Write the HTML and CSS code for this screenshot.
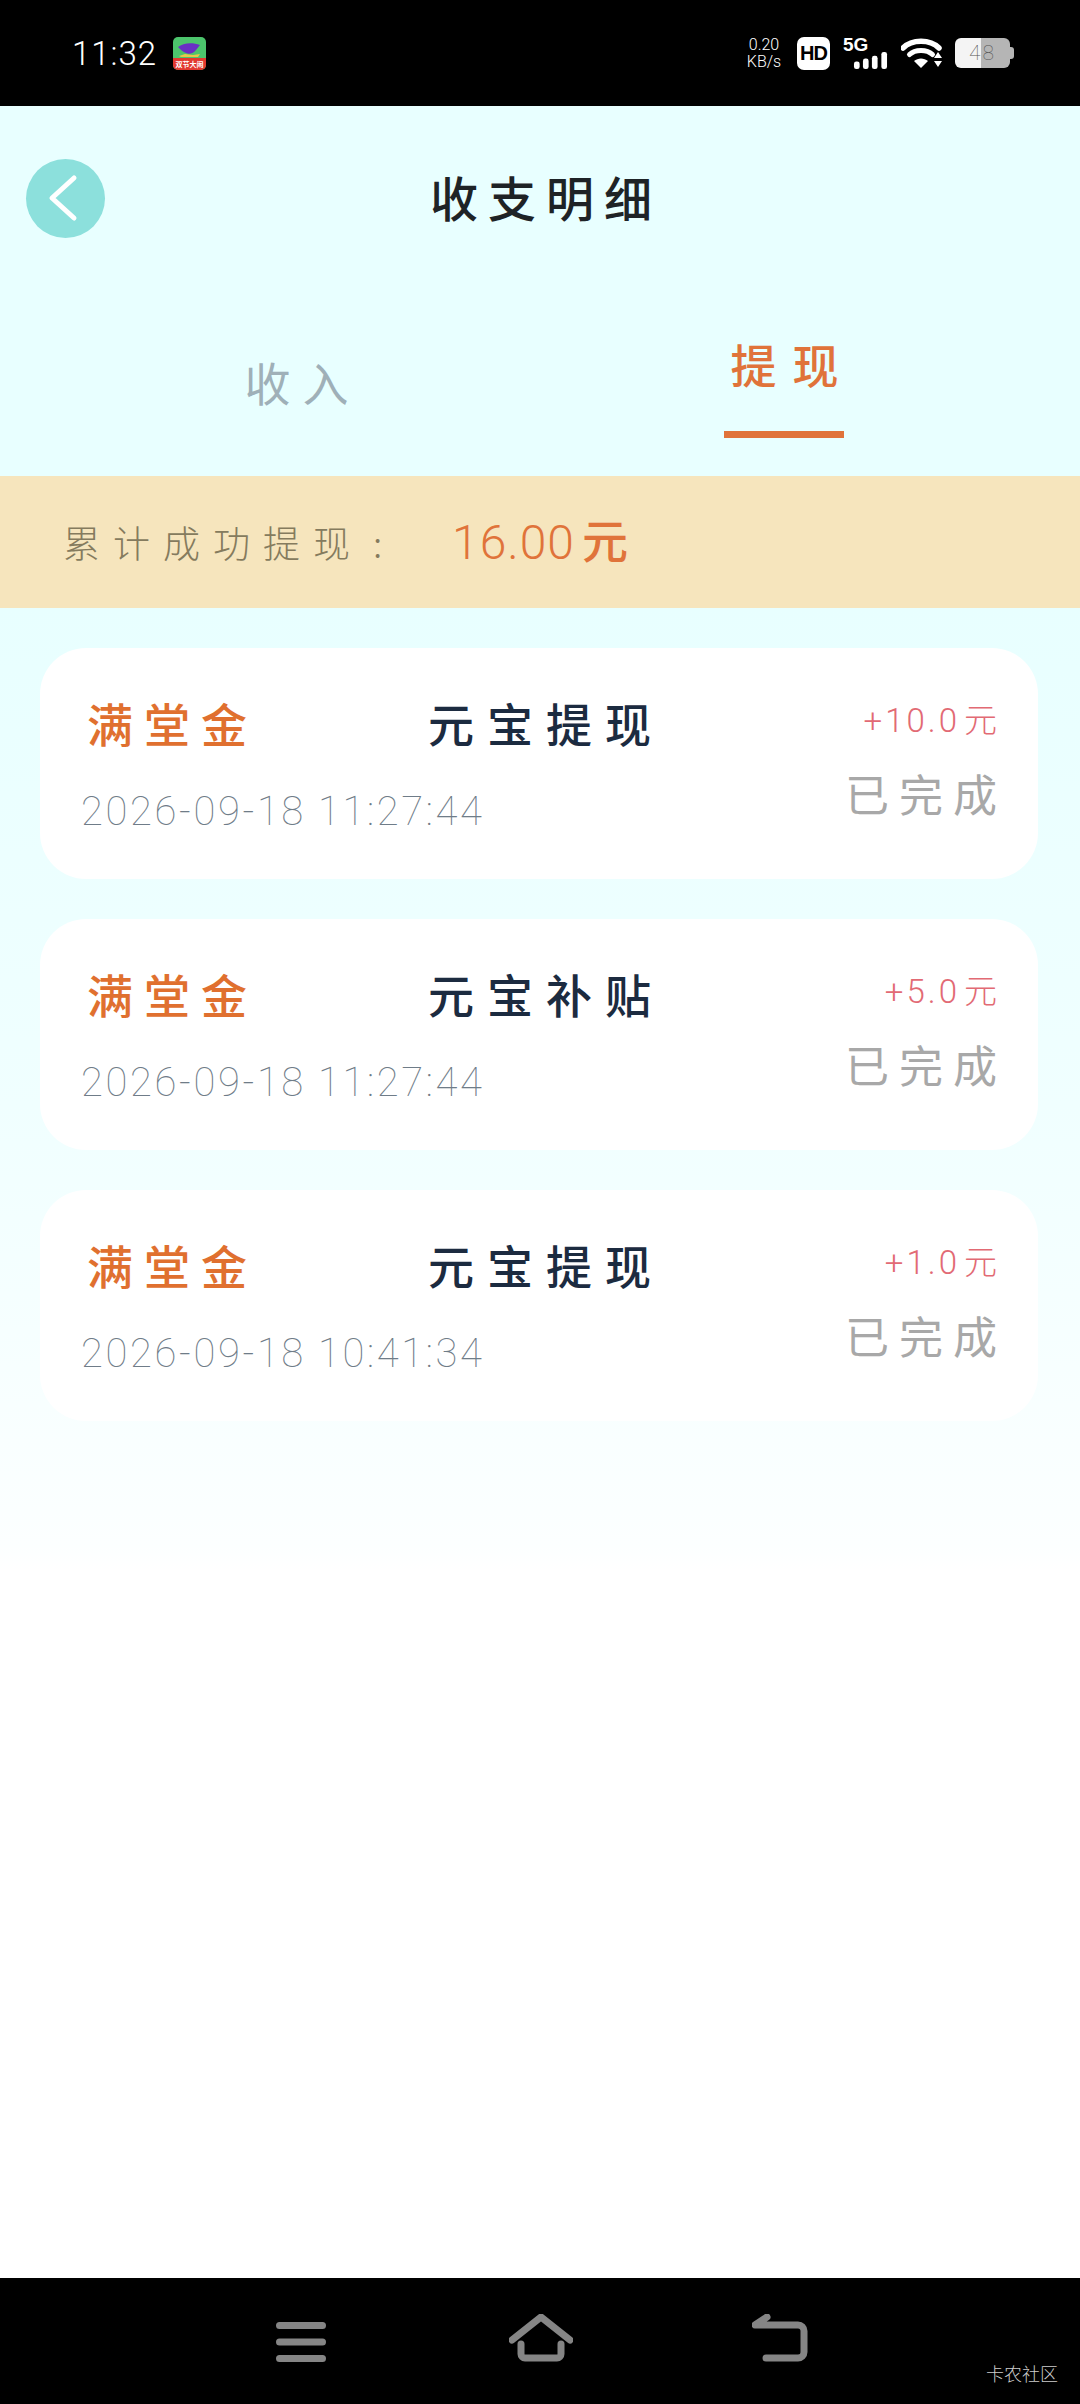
FILE: index.html
```html
<!DOCTYPE html>
<html lang="zh-CN">
<head>
<meta charset="utf-8">
<title>收支明细</title>
<link rel="stylesheet" href="styles.css">
</head>
<body>
<div class="page">
  <header class="statusbar">
    <div class="status-left">
      <span class="clock">11:32</span>
      <svg class="app-icon" viewBox="0 0 33 33" width="33" height="33">
        <rect width="33" height="33" rx="5" fill="#4cc46c"/>
        <path d="M0 21H33V28a5 5 0 0 1-5 5H5a5 5 0 0 1-5-5Z" fill="#e2392f"/>
        <path d="M5 10c5-4 14-5 22-2l-4 5c-2 3-7 5-10 3C10 15 7 12 5 10Z" fill="#6a2fc4"/>
        <path d="M6 19l6-2 8 1 7-1-2 3H8Z" fill="#e8c84a"/>
        <text class="app-icon-text" x="16.5" y="30" text-anchor="middle">双节大闹</text>
      </svg>
    </div>
    <div class="status-right">
      <span class="speed"><span>0.20</span><span>KB/s</span></span>
      <span class="hd">HD</span>
      <span class="net">
        <span class="net-label">5G</span>
        <svg class="signal" viewBox="0 0 35 18" width="35" height="18">
          <rect x="0" y="10" width="6" height="8" rx="2.5" fill="#fff"/>
          <rect x="9.5" y="7" width="6" height="11" rx="2.5" fill="#fff"/>
          <rect x="19" y="4" width="6" height="14" rx="2.5" fill="#fff"/>
          <rect x="29" y="0" width="6" height="18" rx="2.5" fill="#fff"/>
        </svg>
      </span>
      <svg class="wifi" viewBox="0 0 42 30" width="42" height="30">
        <path d="M2 10C11 1 29 1 38 10" fill="none" stroke="#fff" stroke-width="5.5" stroke-linecap="round"/>
        <path d="M8.500 16.500C14 11 26 11 31.500 16.500" fill="none" stroke="#fff" stroke-width="5" stroke-linecap="round"/>
        <path d="M13 23C17 19.500 23 19.500 27 23L20 30Z" fill="#fff"/>
        <path d="M37 14l4 6h-8ZM33 23h8l-4 6Z" fill="#fff"/>
      </svg>
      <span class="battery"><span class="battery-level">48</span></span>
    </div>
  </header>

  <main class="content">
    <div class="topbar">
      <button class="back" type="button" aria-label="返回">
        <svg viewBox="0 0 79 79" width="79" height="79">
          <path d="M48 19 L26 39 L48 59" fill="none" stroke="#fff" stroke-width="5" stroke-linecap="round" stroke-linejoin="round"/>
        </svg>
      </button>
      <h1 class="title">收支明细</h1>
    </div>

    <nav class="tabs">
      <div class="tab">收入</div>
      <div class="tab tab-active">提现<i class="tab-line"></i></div>
    </nav>

    <section class="summary">
      <span class="summary-label">累计成功提现<span class="summary-colon">:</span></span>
      <span class="summary-value">16.00<b>元</b></span>
    </section>

    <section class="list">
      <article class="card">
        <div class="card-top">
          <span class="card-name">满堂金</span>
          <span class="card-type">元宝提现</span>
          <span class="card-amount">+10.0<b>元</b></span>
        </div>
        <div class="card-bottom">
          <span class="card-date">2026-09-18 11:27:44</span>
          <span class="card-status">已完成</span>
        </div>
      </article>
      <article class="card">
        <div class="card-top">
          <span class="card-name">满堂金</span>
          <span class="card-type">元宝补贴</span>
          <span class="card-amount">+5.0<b>元</b></span>
        </div>
        <div class="card-bottom">
          <span class="card-date">2026-09-18 11:27:44</span>
          <span class="card-status">已完成</span>
        </div>
      </article>
      <article class="card">
        <div class="card-top">
          <span class="card-name">满堂金</span>
          <span class="card-type">元宝提现</span>
          <span class="card-amount">+1.0<b>元</b></span>
        </div>
        <div class="card-bottom">
          <span class="card-date">2026-09-18 10:41:34</span>
          <span class="card-status">已完成</span>
        </div>
      </article>
    </section>
  </main>

  <footer class="navbar">
    <svg class="nav-icon" viewBox="0 0 50 40" width="50" height="40">
      <path d="M3.500 3.500H46.500M3.500 20H46.500M3.500 36.500H46.500" fill="none" stroke="#858585" stroke-width="7" stroke-linecap="round"/>
    </svg>
    <svg class="nav-icon" viewBox="0 0 64 48" width="64" height="48">
      <path d="M3 26L32 3L61 26" fill="none" stroke="#858585" stroke-width="7" stroke-linecap="round" stroke-linejoin="round"/>
      <path d="M12 30V40a4 4 0 0 0 4 4H48a4 4 0 0 0 4-4V30" fill="none" stroke="#858585" stroke-width="7" stroke-linecap="round"/>
    </svg>
    <svg class="nav-icon" viewBox="0 0 56 48" width="56" height="48">
      <path d="M15 3L3 11L10 11H46a6 6 0 0 1 6 6V38a6 6 0 0 1-6 6H14" fill="none" stroke="#858585" stroke-width="7" stroke-linecap="round" stroke-linejoin="round"/>
    </svg>
    <span class="watermark">卡农社区</span>
  </footer>
</div>
</body>
</html>
```
FILE: styles.css
```css
* { box-sizing: border-box; }
html, body { margin: 0; padding: 0; }
body { font-family: "Noto Sans CJK SC", "Noto Sans", sans-serif; background: #fff; }
b, i { font-style: normal; font-weight: inherit; }

.page { width: 1080px; height: 2404px; display: flex; flex-direction: column; overflow: hidden; }

/* status bar */
.statusbar { height: 106px; flex: none; background: #000; color: #fff; display: flex; justify-content: space-between; align-items: center; padding: 0 70px 0 72px; }
.status-left { display: flex; align-items: center; gap: 16px; }
.clock { font-family: Roboto, sans-serif; font-weight: 300; font-size: 33px; line-height: 40px; letter-spacing: 1px; width: 85px; margin-top: 2px; }
.app-icon { display: block; }
.app-icon-text { font-size: 7px; fill: #fff; font-weight: 700; }
.status-right { display: flex; align-items: center; }
.speed { display: flex; flex-direction: column; align-items: center; width: 32px; font-family: Roboto, sans-serif; font-weight: 300; font-size: 16px; line-height: 17px; margin-right: 17px; }
.hd { width: 33px; height: 33px; border-radius: 7px; background: #fff; color: #000; font-family: "Liberation Sans", sans-serif; font-weight: 700; font-size: 20px; line-height: 33px; text-align: center; margin-right: 13px; letter-spacing: -1px; }
.net { display: flex; flex-direction: column; width: 45px; height: 32px; margin-right: 13px; }
.net-label { font-family: "Liberation Sans", sans-serif; font-weight: 700; font-size: 19px; line-height: 15px; }
.signal { display: block; margin-left: 10px; }
.wifi { display: block; margin-right: 12px; }
.battery { width: 55px; height: 30px; border-radius: 6px; background: linear-gradient(90deg, #f4f4f4 0 48%, #b5b5b5 48% 100%); color: #555; font-family: Roboto, sans-serif; font-weight: 100; font-size: 21px; line-height: 30px; text-align: center; position: relative; }
.battery::after { content: ""; position: absolute; right: -4px; top: 9px; width: 4px; height: 12px; border-radius: 0 3px 3px 0; background: #b5b5b5; }
.battery-level { letter-spacing: 2px; }

/* content */
.content { flex: 1; min-height: 0; background: linear-gradient(180deg, #e8ffff 0, #e8ffff 500px, #f0ffff 1000px, #f8ffff 1300px, #fcffff 1440px, #ffffff 1465px); }

.topbar { display: grid; grid-template-columns: 79px 1fr 79px; align-items: center; padding: 53px 24px 0 26px; }
.back { width: 79px; height: 79px; padding: 0; border: 0; border-radius: 50%; background: #8ce0dc; display: block; }
.back svg { display: block; }
.title { margin: -6px 0 0; text-align: center; font-size: 48px; font-weight: 500; line-height: 60px; letter-spacing: 10px; color: #1e2326; padding-left: 10px; }

.tabs { display: grid; grid-template-columns: 485px 485px; padding: 0 54px 0 57px; height: 238px; }
.tab { display: flex; flex-direction: column; align-items: center; padding-top: 113px; padding-right: 6px; font-size: 46px; line-height: 60px; letter-spacing: 12px; text-indent: 12px; color: #9fb0b8; font-weight: 400; }
.tab-active { padding-top: 95px; padding-right: 0; color: #e0733a; font-weight: 500; letter-spacing: 16px; text-indent: 16px; }
.tab-line { display: block; width: 120px; height: 7px; background: #e0733a; margin-top: 38px; margin-left: -1px; }

.summary { height: 132px; background: #f6e5bd; display: flex; align-items: center; padding: 0 0 0 63px; }
.summary-label { width: 389px; font-size: 37px; font-weight: 300; letter-spacing: 13px; color: #857b5e; }
.summary-colon { margin-left: 10px; }
.summary-value { font-family: Roboto, sans-serif; font-weight: 300; font-size: 48px; letter-spacing: 1px; color: #e0733a; display: flex; align-items: center; }
.summary-value b { font-family: "Noto Sans CJK SC", sans-serif; font-weight: 500; font-size: 46px; margin-left: 7px; position: relative; top: -4px; }

.list { display: flex; flex-direction: column; gap: 40px; padding: 40px 42px 0 40px; }
.card { height: 231px; border-radius: 46px; background: #fff; padding: 44px 41px 0 41px; display: flex; flex-direction: column; }
.card-top { display: grid; grid-template-columns: 1fr auto 1fr; align-items: center; height: 60px; }
.card-name { font-size: 46px; line-height: 60px; letter-spacing: 11px; color: #e0702f; font-weight: 500; padding-left: 6px; }
.card-type { font-size: 46px; line-height: 60px; letter-spacing: 13px; color: #1c2b40; font-weight: 500; padding-left: 14px; }
.card-amount { justify-self: end; font-family: Roboto, sans-serif; font-weight: 300; font-size: 33px; letter-spacing: 3px; line-height: 44px; color: #e26a74; margin-top: -6px; }
.card-amount b { font-family: "Noto Sans CJK SC", sans-serif; font-weight: 300; letter-spacing: 0; margin-left: 4px; }
.card-bottom { display: flex; justify-content: space-between; align-items: flex-start; margin-top: 12px; }
.card-date { font-family: Roboto, sans-serif; font-weight: 100; font-size: 40px; line-height: 44px; letter-spacing: 2.6px; color: #6f7c88; margin-top: 26px; }
.card-status { font-size: 44px; line-height: 56px; letter-spacing: 10px; margin-right: -10px; margin-top: 1px; color: #a8a8a8; }

/* nav bar */
.navbar { height: 126px; flex: none; background: #000; display: flex; align-items: flex-start; padding: 36px 0 0 276px; position: relative; }
.nav-icon { display: block; }
.nav-icon:nth-child(1) { margin-top: 8px; margin-right: 183px; }
.nav-icon:nth-child(2) { margin-right: 179px; }
.watermark { position: absolute; right: 22px; bottom: 20px; font-size: 18px; line-height: 22px; color: #ccc; font-weight: 300; }
```
